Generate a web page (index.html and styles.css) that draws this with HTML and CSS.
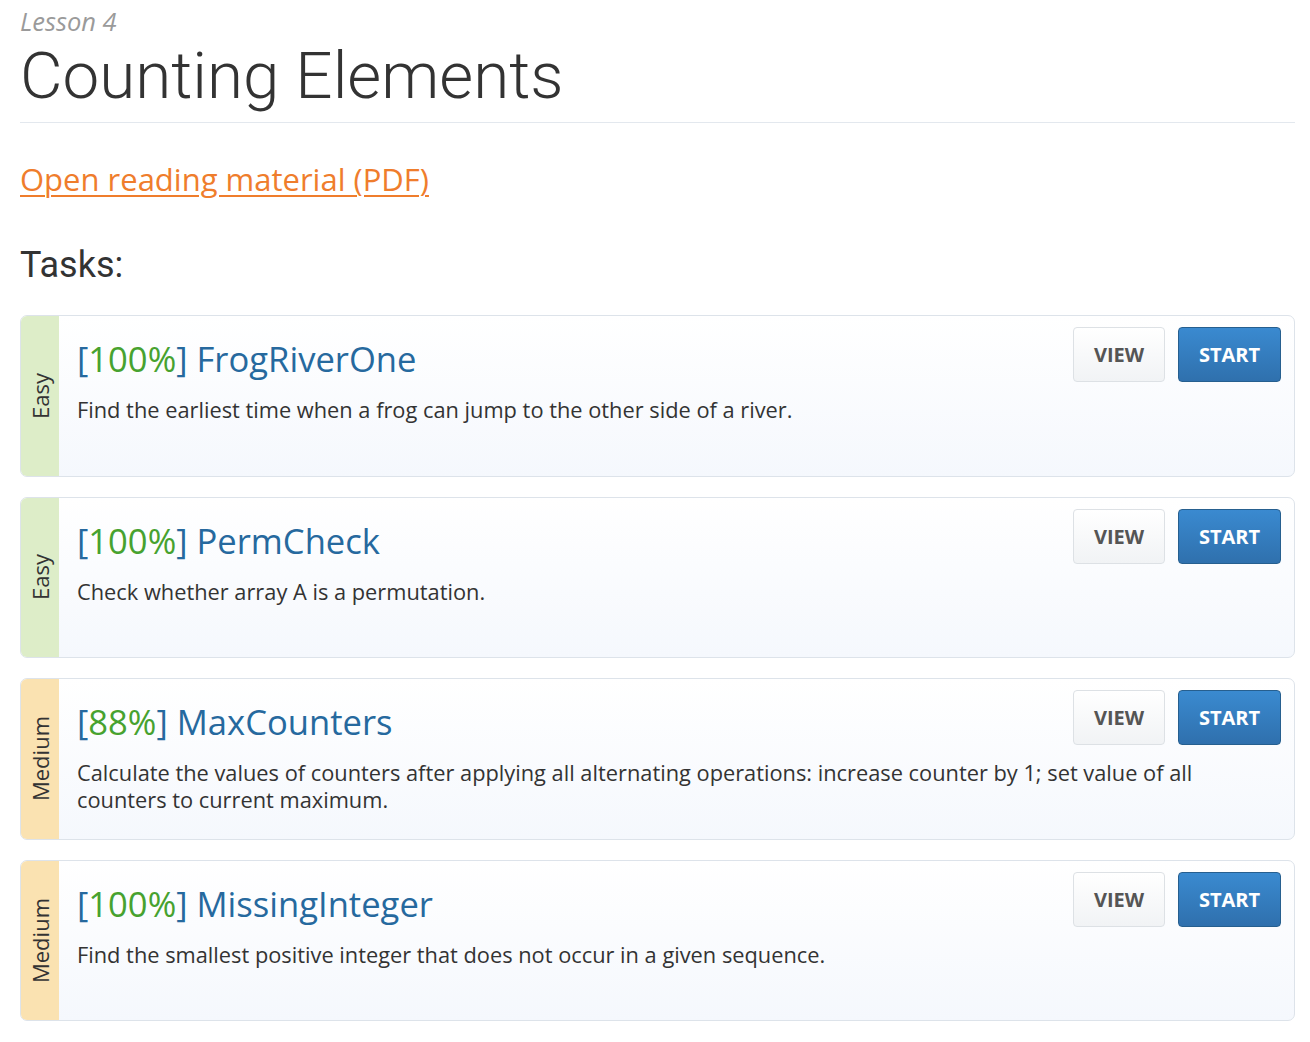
FILE: index.html
```html
<!DOCTYPE html>
<html>
<head>
<meta charset="utf-8">
<link rel="stylesheet" href="styles.css">
</head>
<body>
<div class="page">
  <div class="lesson">Lesson 4</div>
  <h1 class="title">Counting Elements</h1>
  <a class="reading" href="#">Open reading material (PDF)</a>
  <h2 class="tasks-head">Tasks:</h2>
  <div class="tasks">
    <div class="task">
      <div class="level easy"><span>Easy</span></div>
      <div class="body">
        <div class="top">
          <div class="name"><span class="br">[</span><span class="pct">100%</span><span class="br">]</span> FrogRiverOne</div>
          <div class="btns"><a class="btn view">VIEW</a><a class="btn start">START</a></div>
        </div>
        <p class="desc">Find the earliest time when a frog can jump to the other side of a river.</p>
      </div>
    </div>
    <div class="task">
      <div class="level easy"><span>Easy</span></div>
      <div class="body">
        <div class="top">
          <div class="name"><span class="br">[</span><span class="pct">100%</span><span class="br">]</span> PermCheck</div>
          <div class="btns"><a class="btn view">VIEW</a><a class="btn start">START</a></div>
        </div>
        <p class="desc">Check whether array A is a permutation.</p>
      </div>
    </div>
    <div class="task">
      <div class="level medium"><span>Medium</span></div>
      <div class="body">
        <div class="top">
          <div class="name"><span class="br">[</span><span class="pct">88%</span><span class="br">]</span> MaxCounters</div>
          <div class="btns"><a class="btn view">VIEW</a><a class="btn start">START</a></div>
        </div>
        <p class="desc">Calculate the values of counters after applying all alternating operations: increase counter by 1; set value of all counters to current maximum.</p>
      </div>
    </div>
    <div class="task">
      <div class="level medium"><span>Medium</span></div>
      <div class="body">
        <div class="top">
          <div class="name"><span class="br">[</span><span class="pct">100%</span><span class="br">]</span> MissingInteger</div>
          <div class="btns"><a class="btn view">VIEW</a><a class="btn start">START</a></div>
        </div>
        <p class="desc">Find the smallest positive integer that does not occur in a given sequence.</p>
      </div>
    </div>
  </div>
</div>
</body>
</html>
```

FILE: styles.css
```css
* { box-sizing: border-box; }
html, body { margin: 0; padding: 0; background: #fff; }
body { font-family: "Open Sans", "Liberation Sans", sans-serif; color: #333; }
.page { padding: 4px 15px 0 20px; }
.lesson {
  font-style: italic;
  font-size: 25.5px;
  line-height: 34px;
  color: #9a9a9a;
}
.title {
  font-family: Roboto, "Liberation Sans", sans-serif;
  font-weight: 300;
  font-size: 65.5px;
  line-height: 76px;
  color: #333;
  margin: 0;
  padding-bottom: 8px;
  border-bottom: 1px solid #e3e8ee;
}
.reading {
  display: inline-block;
  margin-top: 36px;
  font-size: 31px;
  line-height: 40px;
  color: #ef7d2c;
  text-decoration: underline;
  text-decoration-thickness: 2px;
  text-underline-offset: 4px;
}
.tasks-head {
  font-family: Roboto, "Liberation Sans", sans-serif;
  font-weight: 400;
  font-size: 36px;
  line-height: 44px;
  margin: 44px 0 28px;
  color: #333;
}
.tasks { display: flex; flex-direction: column; gap: 20px; }
.task {
  display: flex;
  height: 161.5px;
  border: 1px solid #dde3ea;
  border-radius: 7px;
  overflow: hidden;
  background: linear-gradient(#ffffff, #f5f8fd);
}
.level {
  width: 38px;
  flex: none;
  display: flex;
  align-items: center;
  justify-content: center;
}
.level span {
  writing-mode: vertical-rl;
  transform: rotate(180deg);
  font-size: 22px;
  color: #333;
}
.level.easy { background: #ddedc8; }
.level.medium { background: #fae2b1; }
.body { flex: 1; padding: 11px 13px 0 18px; }
.top { display: flex; justify-content: space-between; align-items: flex-start; }
.name {
  font-size: 34.6px;
  line-height: 44px;
  margin-top: 10px;
  color: #26699e;
}
.pct { color: #47a22f; }
.btns { display: flex; gap: 13px; }
.btn {
  display: flex;
  align-items: center;
  justify-content: center;
  height: 55px;
  border-radius: 4px;
  font-weight: 700;
  font-size: 20px;
}
.view {
  width: 92px;
  color: #555;
  border: 1px solid #dde1e5;
  background: linear-gradient(#ffffff, #f1f3f5);
}
.start {
  width: 103px;
  color: #fff;
  border: 1px solid #265f8f;
  background: linear-gradient(#3a8ad0, #2f70ad);
}
.desc {
  margin: 0;
  margin-top: 14px;
  font-size: 21.8px;
  line-height: 27px;
  color: #333;
  padding-right: 70px;
}
```
